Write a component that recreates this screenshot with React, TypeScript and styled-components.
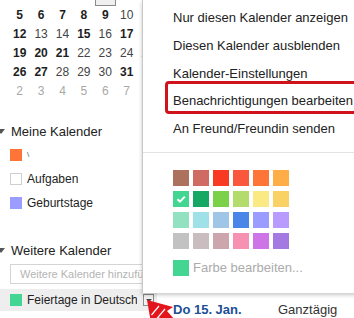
import React from "react";
import styled, { createGlobalStyle, css } from "styled-components";

const Global = createGlobalStyle`
  html, body { margin: 0; padding: 0; background: #fff; }
  body { font-family: "Liberation Sans", Arial, sans-serif; }
  * { box-sizing: border-box; }
`;

const Page = styled.div`
  position: relative;
  width: 354px;
  height: 318px;
  overflow: hidden;
  display: flex;
  background: #fff;
`;

const Sidebar = styled.aside`
  width: 157px;
  flex: none;
  display: flex;
  flex-direction: column;
`;

const MiniCal = styled.div`
  display: grid;
  grid-template-columns: repeat(7, 21.4px);
  grid-auto-rows: 19px;
  margin: -13.5px 0 0 9px;
  font-size: 12px;
`;

const Day = styled.div<{ $bold?: boolean; $muted?: boolean; $today?: boolean }>`
  display: flex;
  align-items: center;
  justify-content: center;
  font-weight: ${(p) => (p.$bold ? 700 : 400)};
  color: ${(p) => (p.$muted ? "#a8a8a8" : p.$bold ? "#1e1e1e" : "#444")};
  ${(p) =>
    p.$today &&
    css`
      border: 1px solid #8a8a8a;
      background: #efefef;
    `}
`;

const SectionHeader = styled.div<{ $top: number }>`
  height: 24px;
  margin-top: ${(p) => p.$top}px;
  display: flex;
  align-items: center;
  gap: 6px;
  font-size: 13px;
  color: #222;
  white-space: nowrap;
`;

const Caret = styled.span`
  width: 0;
  height: 0;
  margin-left: -3px;
  border-left: 4px solid transparent;
  border-right: 4px solid transparent;
  border-top: 5px solid #555;
`;

const CalItem = styled.div<{ $hover?: boolean }>`
  height: ${(p) => (p.$hover ? 22 : 24)}px;
  display: flex;
  align-items: center;
  gap: 5px;
  padding: 0 3px 0 10px;
  font-size: 12px;
  color: #222;
  white-space: nowrap;
  background: ${(p) => (p.$hover ? "#eeeeee" : "transparent")};
  ${(p) =>
    p.$hover &&
    css`
      margin-top: 5px;
    `}
`;

const Swatch = styled.span<{ $color?: string }>`
  width: 12px;
  height: 12px;
  flex: none;
  background: ${(p) => p.$color ?? "#fff"};
  border: ${(p) => (p.$color ? "none" : "1px solid #cfcfcf")};
`;

const CalName = styled.span`
  flex: 1;
  overflow: hidden;
  white-space: nowrap;
`;

const TinyMark = styled.span`
  font-size: 8px;
  color: #555;
  line-height: 1;
`;

const AddInput = styled.input`
  margin: 2px 0 0 10px;
  width: 170px;
  height: 20px;
  flex: none;
  border: 1px solid #d4d4d4;
  padding: 0 0 0 9px;
  font-family: "Liberation Sans", Arial, sans-serif;
  font-size: 11px;
  color: #333;
  outline: none;
  &::placeholder {
    color: #b4b4b4;
  }
`;

const DropButton = styled.span`
  width: 11px;
  height: 12px;
  flex: none;
  margin-left: 1px;
  border: 1px solid #8c8c8c;
  background: #f2f2f2;
  display: flex;
  align-items: center;
  justify-content: center;
  &::after {
    content: "";
    width: 0;
    height: 0;
    border-left: 3px solid transparent;
    border-right: 3px solid transparent;
    border-top: 3px solid #444;
  }
`;

const Main = styled.main`
  flex: 1;
  display: flex;
  flex-direction: column;
  justify-content: flex-end;
`;

const AgendaRow = styled.div`
  height: 18px;
  display: flex;
  align-items: center;
  padding-left: 16px;
  font-size: 13px;
  white-space: nowrap;
`;

const AgendaDate = styled.span`
  width: 105px;
  font-weight: 700;
  color: #204f96;
`;

const AgendaTitle = styled.span`
  color: #333;
`;

const Menu = styled.div`
  position: absolute;
  left: 142px;
  top: 0;
  width: 240px;
  background: #fff;
  border-left: 1px solid #c8c8c8;
  box-shadow: 0 2px 4px rgba(0, 0, 0, 0.22);
  padding: 4px 0 17px;
  z-index: 2;
`;

const MenuItem = styled.div`
  height: 27.7px;
  display: flex;
  align-items: center;
  padding-left: 30px;
  font-size: 13px;
  color: #222;
  white-space: nowrap;
`;

const Separator = styled.div`
  margin-top: 9.5px;
  border-top: 1px solid #e3e3e3;
`;

const Palette = styled.div`
  margin: 17px 0 0 30px;
  display: grid;
  grid-template-columns: repeat(6, 16px);
  grid-auto-rows: 16px;
  column-gap: 4px;
  row-gap: 5px;
`;

const Color = styled.span<{ $color: string }>`
  width: 16px;
  height: 16px;
  background: ${(p) => p.$color};
  display: flex;
  align-items: center;
  justify-content: center;
`;

const EditRow = styled.div`
  margin: 11px 0 0 30px;
  display: flex;
  align-items: center;
  gap: 4px;
  font-size: 13px;
  color: #ababab;
`;

const Highlight = styled.div`
  position: absolute;
  left: 165px;
  top: 81px;
  width: 200px;
  height: 33px;
  border: 3px solid #d0121b;
  border-radius: 4px;
  z-index: 3;
`;

const Arrow = styled.svg`
  position: absolute;
  left: 141px;
  top: 296px;
  z-index: 3;
`;

const weeks: { d: number; b?: boolean; m?: boolean; t?: boolean }[][] = [
  [{ d: 29, m: true }, { d: 30, m: true }, { d: 31, m: true }, { d: 1 }, { d: 2, t: true }, { d: 3 }, { d: 4 }],
  [{ d: 5, b: true }, { d: 6, b: true }, { d: 7, b: true }, { d: 8, b: true }, { d: 9, b: true }, { d: 10 }, { d: 11 }],
  [{ d: 12, b: true }, { d: 13 }, { d: 14 }, { d: 15, b: true }, { d: 16 }, { d: 17, b: true }, { d: 18 }],
  [{ d: 19, b: true }, { d: 20, b: true }, { d: 21, b: true }, { d: 22 }, { d: 23 }, { d: 24 }, { d: 25 }],
  [{ d: 26, b: true }, { d: 27, b: true }, { d: 28 }, { d: 29 }, { d: 30 }, { d: 31, b: true }, { d: 1, m: true }],
  [{ d: 2, m: true }, { d: 3, m: true }, { d: 4, m: true }, { d: 5, m: true }, { d: 6, m: true }, { d: 7, m: true }, { d: 8, m: true }],
];

const palette = [
  "#ac725e", "#d06b64", "#f83a22", "#fa573c", "#ff7537", "#ffad46",
  "#42d692", "#16a765", "#7bd148", "#b3dc6c", "#fbe983", "#fad165",
  "#92e1c0", "#9fe1e7", "#9fc6e7", "#4986e7", "#9a9cff", "#b99aff",
  "#c2c2c2", "#cabdbf", "#cca6ac", "#f691b2", "#cd74e6", "#a47ae2",
];

const menuItems = [
  "Nur diesen Kalender anzeigen",
  "Diesen Kalender ausblenden",
  "Kalender-Einstellungen",
  "Benachrichtigungen bearbeiten",
  "An Freund/Freundin senden",
];

export default function App() {
  return (
    <>
      <Global />
      <Page>
        <Sidebar>
          <MiniCal>
            {weeks.flat().map((c, i) => (
              <Day key={i} $bold={c.b} $muted={c.m} $today={c.t}>
                {c.d}
              </Day>
            ))}
          </MiniCal>

          <SectionHeader $top={18.5}>
            <Caret />
            Meine Kalender
          </SectionHeader>
          <CalItem>
            <Swatch $color="#ff7537" />
            <TinyMark>\</TinyMark>
          </CalItem>
          <CalItem>
            <Swatch />
            <CalName>Aufgaben</CalName>
          </CalItem>
          <CalItem>
            <Swatch $color="#9a9cff" />
            <CalName>Geburtstage</CalName>
          </CalItem>

          <SectionHeader $top={23}>
            <Caret />
            Weitere Kalender
          </SectionHeader>
          <AddInput placeholder="Weitere Kalender hinzufügen" />
          <CalItem $hover>
            <Swatch $color="#42d692" />
            <CalName>Feiertage in Deutschland</CalName>
            <DropButton />
          </CalItem>
        </Sidebar>

        <Main>
          <AgendaRow>
            <AgendaDate>Do 15. Jan.</AgendaDate>
            <AgendaTitle>Ganztägig</AgendaTitle>
          </AgendaRow>
        </Main>

        <Menu>
          {menuItems.map((m) => (
            <MenuItem key={m}>{m}</MenuItem>
          ))}
          <Separator />
          <Palette>
            {palette.map((c, i) => (
              <Color key={c} $color={c}>
                {i === 6 && (
                  <svg width="12" height="12" viewBox="0 0 12 12">
                    <path d="M2.5 6.2 L5 8.6 L9.8 3.6" fill="none" stroke="#fff" strokeWidth="2" />
                  </svg>
                )}
              </Color>
            ))}
          </Palette>
          <EditRow>
            <Color $color="#42d692" />
            Farbe bearbeiten...
          </EditRow>
        </Menu>

        <Highlight />
        <Arrow width="36" height="22" viewBox="0 0 36 22">
          <polygon points="6,4 32,11 26,15 34,24 22,28 18,21 10,27" fill="#e3141c" />
          <path d="M18 10 L10.5 19 M24 13 L15.5 23" stroke="#fff" strokeWidth="1.2" />
        </Arrow>
      </Page>
    </>
  );
}
